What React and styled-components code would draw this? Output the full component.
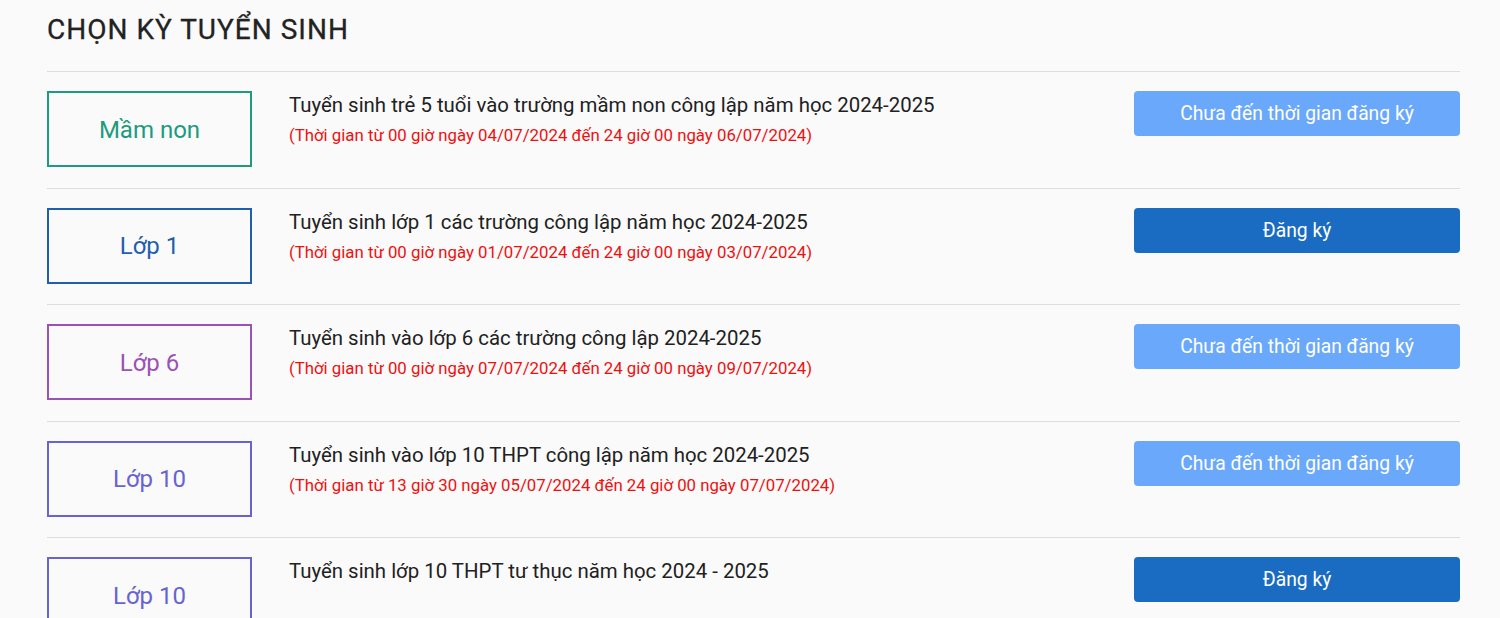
import React from 'react';
import styled, { createGlobalStyle } from 'styled-components';

const GlobalStyle = createGlobalStyle`
  body {
    margin: 0;
    background: #fafafa;
    font-family: Roboto, "Noto Sans", Arial, sans-serif;
    color: #212529;
  }
`;

const periods = [
  {
    label: 'Mầm non',
    color: '#1d9b7e',
    title: 'Tuyển sinh trẻ 5 tuổi vào trường mầm non công lập năm học 2024-2025',
    time: '(Thời gian từ 00 giờ ngày 04/07/2024 đến 24 giờ 00 ngày 06/07/2024)',
    open: false,
  },
  {
    label: 'Lớp 1',
    color: '#1f5fae',
    title: 'Tuyển sinh lớp 1 các trường công lập năm học 2024-2025',
    time: '(Thời gian từ 00 giờ ngày 01/07/2024 đến 24 giờ 00 ngày 03/07/2024)',
    open: true,
  },
  {
    label: 'Lớp 6',
    color: '#9b52b6',
    title: 'Tuyển sinh vào lớp 6 các trường công lập 2024-2025',
    time: '(Thời gian từ 00 giờ ngày 07/07/2024 đến 24 giờ 00 ngày 09/07/2024)',
    open: false,
  },
  {
    label: 'Lớp 10',
    color: '#6863d2',
    title: 'Tuyển sinh vào lớp 10 THPT công lập năm học 2024-2025',
    time: '(Thời gian từ 13 giờ 30 ngày 05/07/2024 đến 24 giờ 00 ngày 07/07/2024)',
    open: false,
  },
  {
    label: 'Lớp 10',
    color: '#6863d2',
    title: 'Tuyển sinh lớp 10 THPT tư thục năm học 2024 - 2025',
    time: null,
    open: true,
  },
];

const App = () => {
  return (
    <>
      <GlobalStyle />
      <Page>
        <Heading>CHỌN KỲ TUYỂN SINH</Heading>
        <List>
          {periods.map((p, i) => (
            <Row key={i}>
              <LevelBox $color={p.color}>{p.label}</LevelBox>
              <Info>
                <Title>{p.title}</Title>
                {p.time && <Time>{p.time}</Time>}
              </Info>
              <ActionButton $open={p.open}>
                {p.open ? 'Đăng ký' : 'Chưa đến thời gian đăng ký'}
              </ActionButton>
            </Row>
          ))}
        </List>
      </Page>
    </>
  );
};

export default App;

const Page = styled.div`
  padding: 12px 40px 0 47px;
  height: 618px;
  overflow: hidden;
  box-sizing: border-box;
`;

const Heading = styled.h2`
  margin: 0;
  font-size: 28px;
  font-weight: 400;
  letter-spacing: 1px;
  line-height: 36px;
  color: #222;
  padding-bottom: 23px;
  -webkit-text-stroke: 0.3px #222;
`;

const List = styled.div`
  border-top: 1px solid #dedede;
`;

const Row = styled.div`
  display: flex;
  align-items: flex-start;
  padding: 19px 0 20.5px;
  border-bottom: 1px solid #dedede;
`;

const LevelBox = styled.div`
  flex: 0 0 205px;
  height: 76px;
  box-sizing: border-box;
  border: 2px solid ${(p) => p.$color};
  color: ${(p) => p.$color};
  display: flex;
  align-items: center;
  justify-content: center;
  font-size: 24px;
  padding-top: 1px;
`;

const Info = styled.div`
  flex: 1;
  padding-left: 37px;
  display: flex;
  flex-direction: column;
  gap: 3px;
`;

const Title = styled.div`
  font-size: 20.4px;
  line-height: 29px;
  color: #212121;
`;

const Time = styled.div`
  font-size: 16.8px;
  line-height: 24px;
  color: #f00f0f;
`;

const ActionButton = styled.button`
  all: unset;
  box-sizing: border-box;
  flex: 0 0 326px;
  height: 45px;
  border-radius: 4px;
  display: flex;
  align-items: center;
  justify-content: center;
  font-family: Roboto, "Noto Sans", Arial, sans-serif;
  font-size: 19.3px;
  color: #fff;
  background: ${(p) => (p.$open ? '#1a6bc2' : '#6aa8fb')};
  cursor: pointer;
`;
